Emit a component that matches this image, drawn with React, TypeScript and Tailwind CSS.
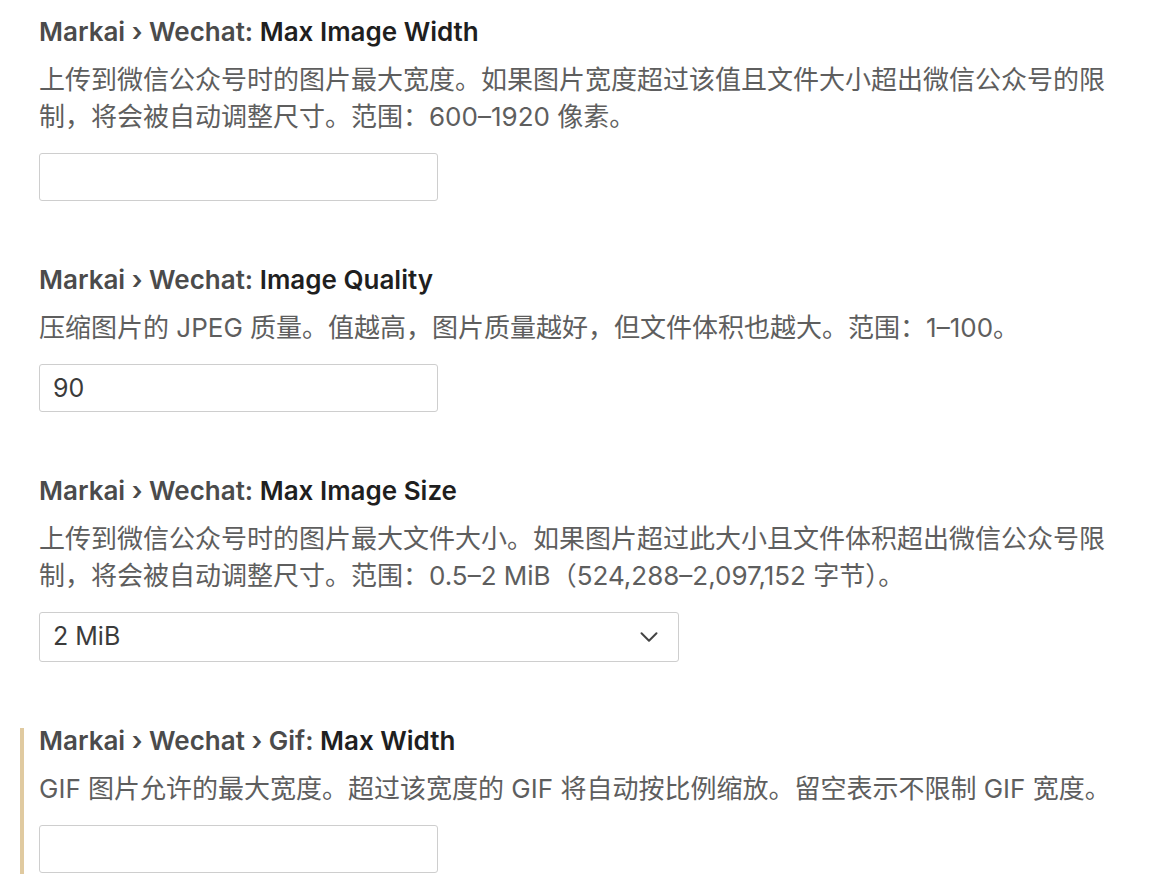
import { ChevronDown } from 'lucide-react';

interface SettingItem {
  category: string;
  label: string;
  description: string;
  kind: 'input' | 'select';
  value: string;
  modified?: boolean;
}

const settings: SettingItem[] = [
  {
    category: 'Markai › Wechat: ',
    label: 'Max Image Width',
    description:
      '上传到微信公众号时的图片最大宽度。如果图片宽度超过该值且文件大小超出微信公众号的限制，将会被自动调整尺寸。范围：600–1920 像素。',
    kind: 'input',
    value: '',
  },
  {
    category: 'Markai › Wechat: ',
    label: 'Image Quality',
    description: '压缩图片的 JPEG 质量。值越高，图片质量越好，但文件体积也越大。范围：1–100。',
    kind: 'input',
    value: '90',
  },
  {
    category: 'Markai › Wechat: ',
    label: 'Max Image Size',
    description:
      '上传到微信公众号时的图片最大文件大小。如果图片超过此大小且文件体积超出微信公众号限制，将会被自动调整尺寸。范围：0.5–2 MiB（524,288–2,097,152 字节）。',
    kind: 'select',
    value: '2 MiB',
  },
  {
    category: 'Markai › Wechat › Gif: ',
    label: 'Max Width',
    description: 'GIF 图片允许的最大宽度。超过该宽度的 GIF 将自动按比例缩放。留空表示不限制 GIF 宽度。',
    kind: 'input',
    value: '',
    modified: true,
  },
];

const font = "font-['Inter','Noto_Sans_CJK_SC',sans-serif]";

const Setting = ({ item }: { item: SettingItem }) => (
  <div className="flex">
    {/* modified indicator */}
    <div className={`w-[4px] mt-[5px] -mb-[1px] shrink-0 ${item.modified ? 'bg-[#e0caa0]' : 'bg-transparent'}`} />
    <div className="pl-[15px] w-[1095px]">
      <div className="text-[26px] leading-[36px] font-semibold whitespace-nowrap">
        <span className="text-[#4b4b4b]">{item.category}</span>
        <span className="text-[#1f1f1f]">{item.label}</span>
      </div>
      <p className="mt-[11px] w-[1080px] text-[26px] leading-[37px] text-[#5e5e5e]">{item.description}</p>
      {item.kind === 'input' ? (
        <input
          type="text"
          defaultValue={item.value}
          className="mt-[18px] block w-[399px] h-[48px] px-[13px] border border-[#cecece] rounded-[3px] text-[25px] text-[#3b3b3b] outline-none bg-white"
        />
      ) : (
        <div className="mt-[18px] w-[640px] h-[50px] px-[13px] flex items-center justify-between border border-[#cecece] rounded-[3px] bg-white">
          <span className="text-[25px] text-[#3b3b3b]">{item.value}</span>
          <ChevronDown className="text-[#444] mr-[1px]" size={30} strokeWidth={1.6} />
        </div>
      )}
    </div>
  </div>
);

export default function App() {
  return (
    <div className={`min-h-screen bg-white pl-[20px] pt-[14px] flex flex-col gap-[61px] ${font}`}>
      {settings.map((s, i) => (
        <Setting key={i} item={s} />
      ))}
    </div>
  );
}
